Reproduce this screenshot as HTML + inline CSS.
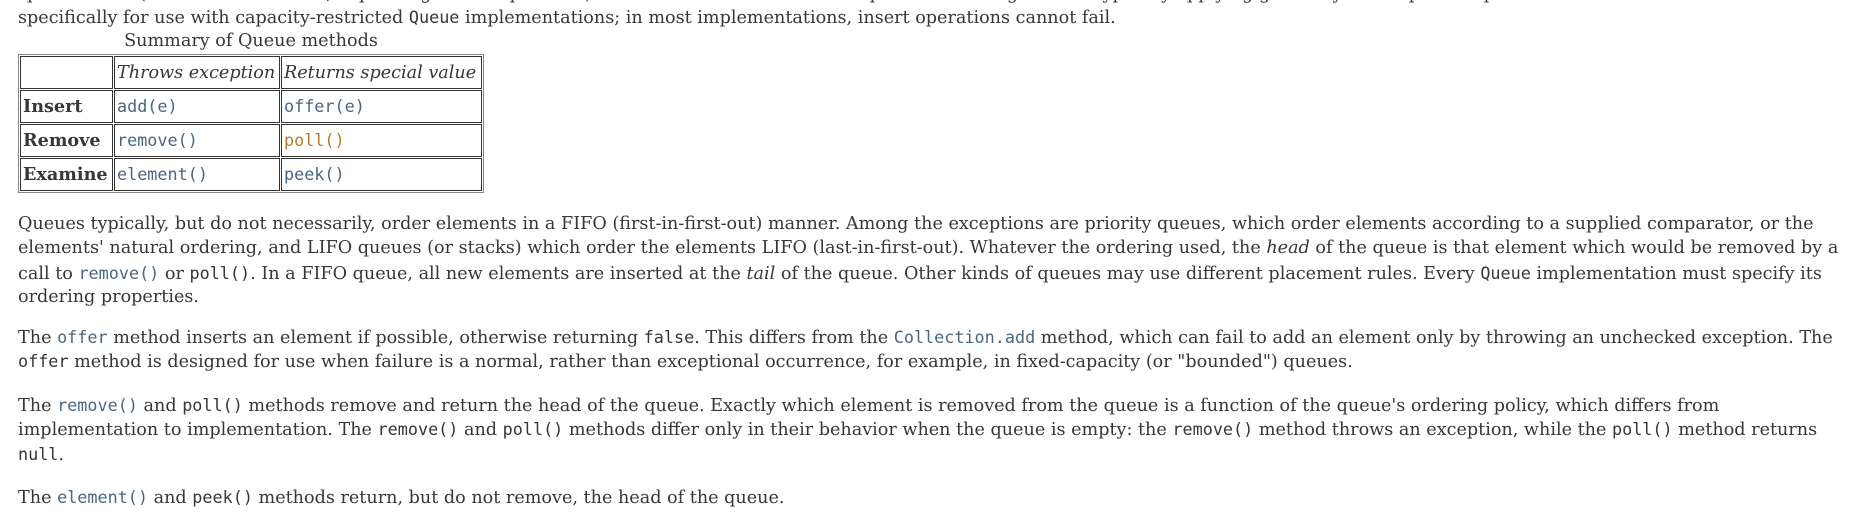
<!DOCTYPE html>
<html><head><meta charset="utf-8"><style>
html,body{margin:0;padding:0;background:#fff;width:1853px;height:515px;overflow:hidden;position:relative}
body{font-family:"DejaVu Serif","Liberation Serif",serif;font-size:17.6px;color:#353833}
.l{position:absolute;left:18px;white-space:nowrap;line-height:24px;height:24px}
code{font-family:"DejaVu Sans Mono","Liberation Mono",monospace;font-size:16.8px;color:#353833}
code.a{color:#4a6782}
code.v{color:#bb7a2a}
table{position:absolute;left:18px;top:54px;border:1px solid #888;border-spacing:1px;border-collapse:separate;width:466px;font-size:17.6px}
td{border:1px solid #333;height:31px;padding:0 0 0 2px;vertical-align:middle;line-height:20px;white-space:nowrap}
td.h{font-style:italic}
td b{font-weight:bold}
.cap{position:absolute;left:18px;width:466px;text-align:center;top:29px;line-height:24px}
</style></head><body>
<div class="l" style="top:-19px">special value (either <code>null</code> or <code>false</code>, depending on the operation). The latter form of the insert operation is designed and typically applying generally more specific operations</div>
<div class="l" style="top:5px">specifically for use with capacity-restricted <code>Queue</code> implementations; in most implementations, insert operations cannot fail.</div>
<div class="cap">Summary of Queue methods</div>
<table>
<tr><td style="width:89px"></td><td class="h" style="width:162px">Throws exception</td><td class="h">Returns special value</td></tr>
<tr><td><b>Insert</b></td><td><code class="a">add(e)</code></td><td><code class="a">offer(e)</code></td></tr>
<tr><td><b>Remove</b></td><td><code class="a">remove()</code></td><td><code class="v">poll()</code></td></tr>
<tr><td><b>Examine</b></td><td><code class="a">element()</code></td><td><code class="a">peek()</code></td></tr>
</table>
<div class="l" style="top:212px">Queues typically, but do not necessarily, order elements in a FIFO (first-in-first-out) manner. Among the exceptions are priority queues, which order elements according to a supplied comparator, or the</div>
<div class="l" style="top:236px">elements' natural ordering, and LIFO queues (or stacks) which order the elements LIFO (last-in-first-out). Whatever the ordering used, the <i>head</i> of the queue is that element which would be removed by a</div>
<div class="l" style="top:261px">call to <code class="a">remove()</code> or <code>poll()</code>. In a FIFO queue, all new elements are inserted at the <i>tail</i> of the queue. Other kinds of queues may use different placement rules. Every <code>Queue</code> implementation must specify its</div>
<div class="l" style="top:285px">ordering properties.</div>
<div class="l" style="top:325px">The <code class="a">offer</code> method inserts an element if possible, otherwise returning <code>false</code>. This differs from the <code class="a">Collection.add</code> method, which can fail to add an element only by throwing an unchecked exception. The</div>
<div class="l" style="top:349px"><code>offer</code> method is designed for use when failure is a normal, rather than exceptional occurrence, for example, in fixed-capacity (or "bounded") queues.</div>
<div class="l" style="top:393px">The <code class="a">remove()</code> and <code>poll()</code> methods remove and return the head of the queue. Exactly which element is removed from the queue is a function of the queue's ordering policy, which differs from</div>
<div class="l" style="top:417px">implementation to implementation. The <code>remove()</code> and <code>poll()</code> methods differ only in their behavior when the queue is empty: the <code>remove()</code> method throws an exception, while the <code>poll()</code> method returns</div>
<div class="l" style="top:442px"><code>null</code>.</div>
<div class="l" style="top:485px">The <code class="a">element()</code> and <code>peek()</code> methods return, but do not remove, the head of the queue.</div>
</body></html>
